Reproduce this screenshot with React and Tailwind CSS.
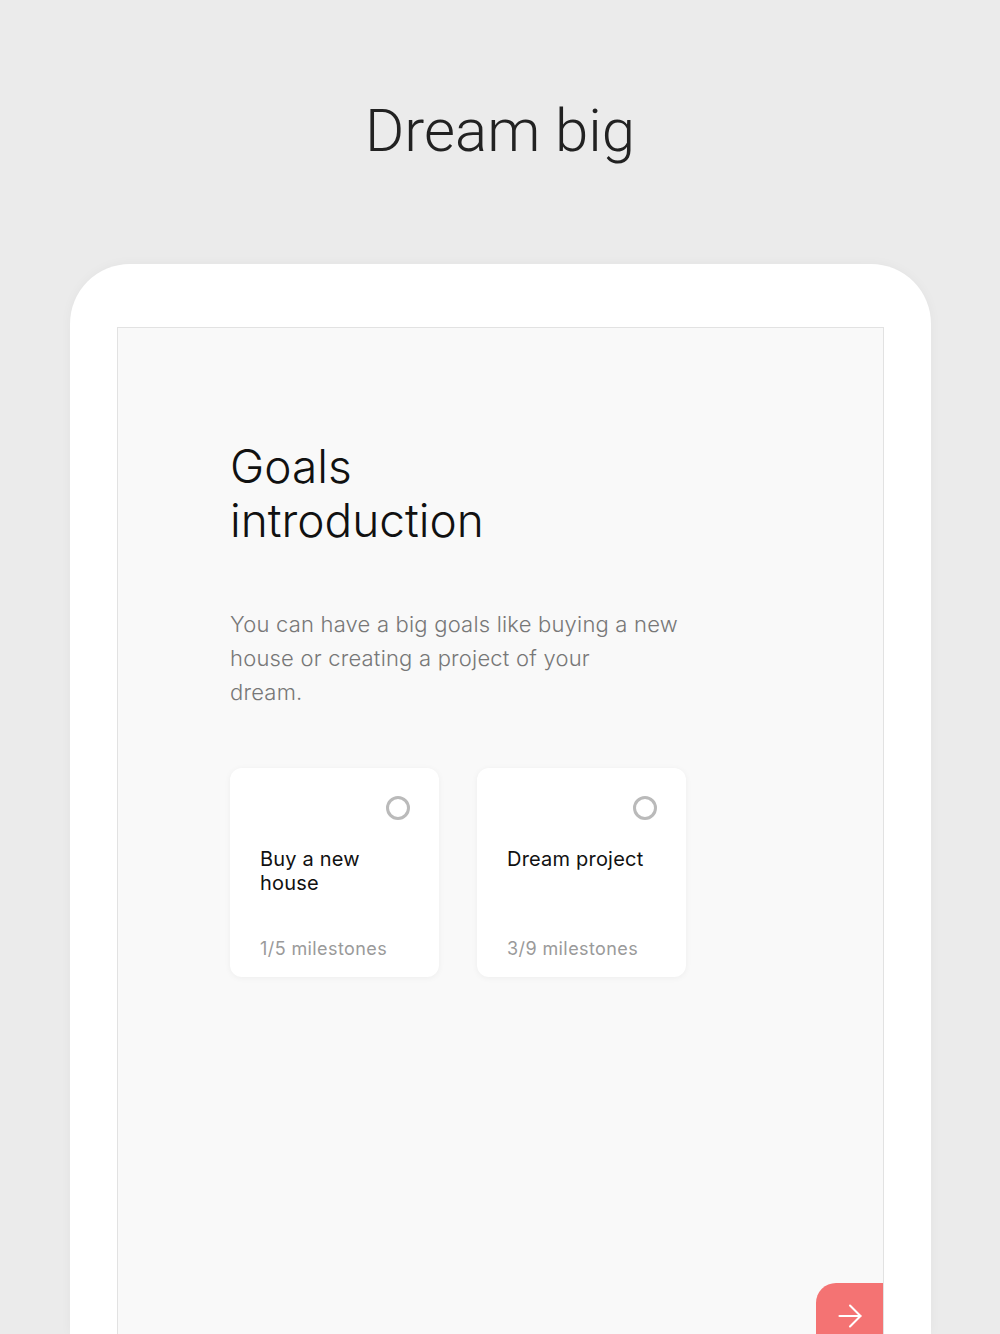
import { ArrowRight } from "lucide-react";

const goals = [
  { title: "Buy a new house", done: 1, total: 5 },
  { title: "Dream project", done: 3, total: 9 },
];

const GoalCard = ({ title, done, total }) => (
  <div className="w-[209px] h-[209px] bg-white rounded-[12px] shadow-[0_1px_6px_rgba(0,0,0,0.05)] flex flex-col pl-[30px] pr-[29px] pt-[28px] pb-[17px]">
    <div className="flex justify-end">
      <div className="w-[24px] h-[24px] rounded-full border-[3px] border-[#bababa]" />
    </div>
    <div className="mt-[27px] w-[150px] text-[20px] leading-[24px] text-[#111] tracking-[0.2px]">{title}</div>
    <div className="mt-auto text-[18px] leading-[22px] text-[#9a9a9a] tracking-[0.4px]">
      {done}/{total} milestones
    </div>
  </div>
);

const App = () => {
  return (
    <div
      className="w-full h-[1334px] overflow-hidden bg-[#ebebeb] flex flex-col"
      style={{ fontFamily: "Inter, 'Noto Sans', sans-serif" }}
    >
      <div className="h-[264px] shrink-0 pt-[99px] text-center">
        <h1
          className="text-[60px] leading-[64px] font-light text-[#222]"
          style={{ fontFamily: "Roboto, 'Noto Sans', sans-serif" }}
        >
          Dream big
        </h1>
      </div>

      <div className="flex-1 ml-[70px] mr-[69px] bg-white rounded-t-[60px] px-[47px] pt-[63px] flex flex-col shadow-[0_0_12px_rgba(0,0,0,0.04)]">
        <div className="relative flex-1 bg-[#f9f9f9] border border-b-0 border-[#e2e2e2] pl-[112px] pt-[111px]">
          <h2 className="text-[46px] leading-[54px] font-light text-[#111]">
            Goals
            <br />
            introduction
          </h2>

          <p className="mt-[60px] text-[22px] leading-[34px] font-light text-[#777] tracking-[0.2px]">
            You can have a big goals like buying a new
            <br />
            house or creating a project of your
            <br />
            dream.
          </p>

          <div className="mt-[59px] flex gap-[38px]">
            {goals.map((g) => (
              <GoalCard key={g.title} {...g} />
            ))}
          </div>

          <button className="absolute right-0 bottom-0 w-[67px] h-[51px] bg-[#f47373] rounded-tl-[20px] flex items-center justify-center text-white">
            <ArrowRight size={36} strokeWidth={1.4} className="mt-[14px]" />
          </button>
        </div>
      </div>
    </div>
  );
};

export default App;
